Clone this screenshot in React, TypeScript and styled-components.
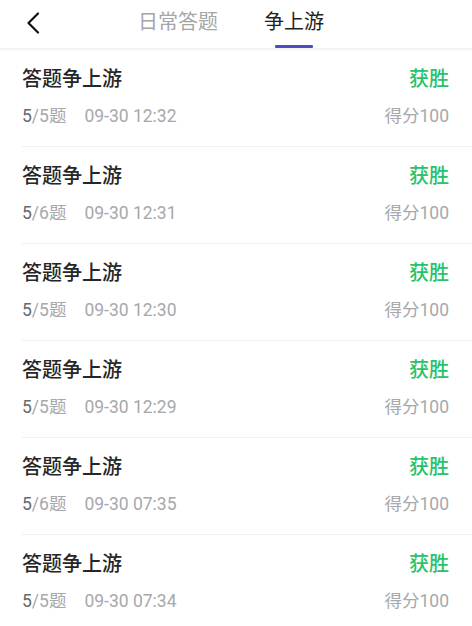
import React from "react";
import styled, { createGlobalStyle } from "styled-components";

const GlobalStyle = createGlobalStyle`
  html, body { margin: 0; padding: 0; background: #ffffff; }
  body { font-family: Roboto, "Noto Sans CJK SC", sans-serif; -webkit-font-smoothing: antialiased; }
`;

const Page = styled.div`
  width: 472px;
  min-height: 626px;
  background: #ffffff;
  overflow: hidden;
`;

const Header = styled.header`
  height: 48px;
  display: flex;
  align-items: flex-start;
  border-bottom: 2px solid #f3f3f5;
  box-sizing: content-box;
`;

const BackButton = styled.button`
  margin: 12px 0 0 26px;
  padding: 0;
  width: 14px;
  height: 22px;
  border: none;
  background: transparent;
  display: flex;
  align-items: center;
  justify-content: center;
`;

const Tabs = styled.nav`
  display: flex;
  gap: 46px;
  margin-left: 98px;
`;

const Tab = styled.div<{ $active?: boolean }>`
  display: flex;
  flex-direction: column;
  align-items: center;
  padding-top: 10px;
  font-family: Roboto, "Noto Sans CJK SC", sans-serif;
  font-size: 20px;
  line-height: 24px;
  color: ${(p) => (p.$active ? "#1f1f1f" : "#a4a6a9")};
  font-weight: 400;
`;

const Indicator = styled.div<{ $active?: boolean }>`
  margin-top: 11px;
  width: 38px;
  height: 3px;
  border-radius: 1px;
  background: ${(p) => (p.$active ? "#4b4cc3" : "transparent")};
`;

const List = styled.main`
  display: flex;
  flex-direction: column;
`;

const Row = styled.div`
  margin-left: 22px;
  padding: 17px 23px 20px 0;
  border-bottom: 1px solid #f1f1f3;
  display: flex;
  flex-direction: column;
  gap: 15px;
`;

const Line = styled.div`
  display: flex;
  justify-content: space-between;
  align-items: center;
`;

const Title = styled.span`
  font-size: 20px;
  line-height: 24px;
  color: #262626;
  font-weight: 500;
`;

const Result = styled.span`
  font-size: 20px;
  line-height: 24px;
  color: #27c26c;
  font-weight: 500;
`;

const Meta = styled.span`
  font-size: 17.5px;
  line-height: 20px;
  color: #a6a8ac;
  display: flex;
  gap: 18px;
`;

const Correct = styled.span`
  color: #67696d;
`;

const Score = styled.span`
  font-size: 17.5px;
  line-height: 20px;
  color: #a6a8ac;
`;

type Record = { correct: number; total: number; time: string; score: number };

const records: Record[] = [
  { correct: 5, total: 5, time: "09-30 12:32", score: 100 },
  { correct: 5, total: 6, time: "09-30 12:31", score: 100 },
  { correct: 5, total: 5, time: "09-30 12:30", score: 100 },
  { correct: 5, total: 5, time: "09-30 12:29", score: 100 },
  { correct: 5, total: 6, time: "09-30 07:35", score: 100 },
  { correct: 5, total: 5, time: "09-30 07:34", score: 100 },
];

export default function App() {
  return (
    <Page>
      <GlobalStyle />
      <Header>
        <BackButton aria-label="返回">
          <svg width="14" height="22" viewBox="0 0 14 22" fill="none">
            <path d="M12 1.5 L2.5 11 L12 20.5" stroke="#111" strokeWidth="2.2" strokeLinecap="round" strokeLinejoin="round" />
          </svg>
        </BackButton>
        <Tabs>
          <Tab>
            日常答题
            <Indicator />
          </Tab>
          <Tab $active>
            争上游
            <Indicator $active />
          </Tab>
        </Tabs>
      </Header>
      <List>
        {records.map((r, i) => (
          <Row key={i}>
            <Line>
              <Title>答题争上游</Title>
              <Result>获胜</Result>
            </Line>
            <Line>
              <Meta>
                <span>
                  <Correct>{r.correct}</Correct>/{r.total}题
                </span>
                <span>{r.time}</span>
              </Meta>
              <Score>得分{r.score}</Score>
            </Line>
          </Row>
        ))}
      </List>
    </Page>
  );
}
